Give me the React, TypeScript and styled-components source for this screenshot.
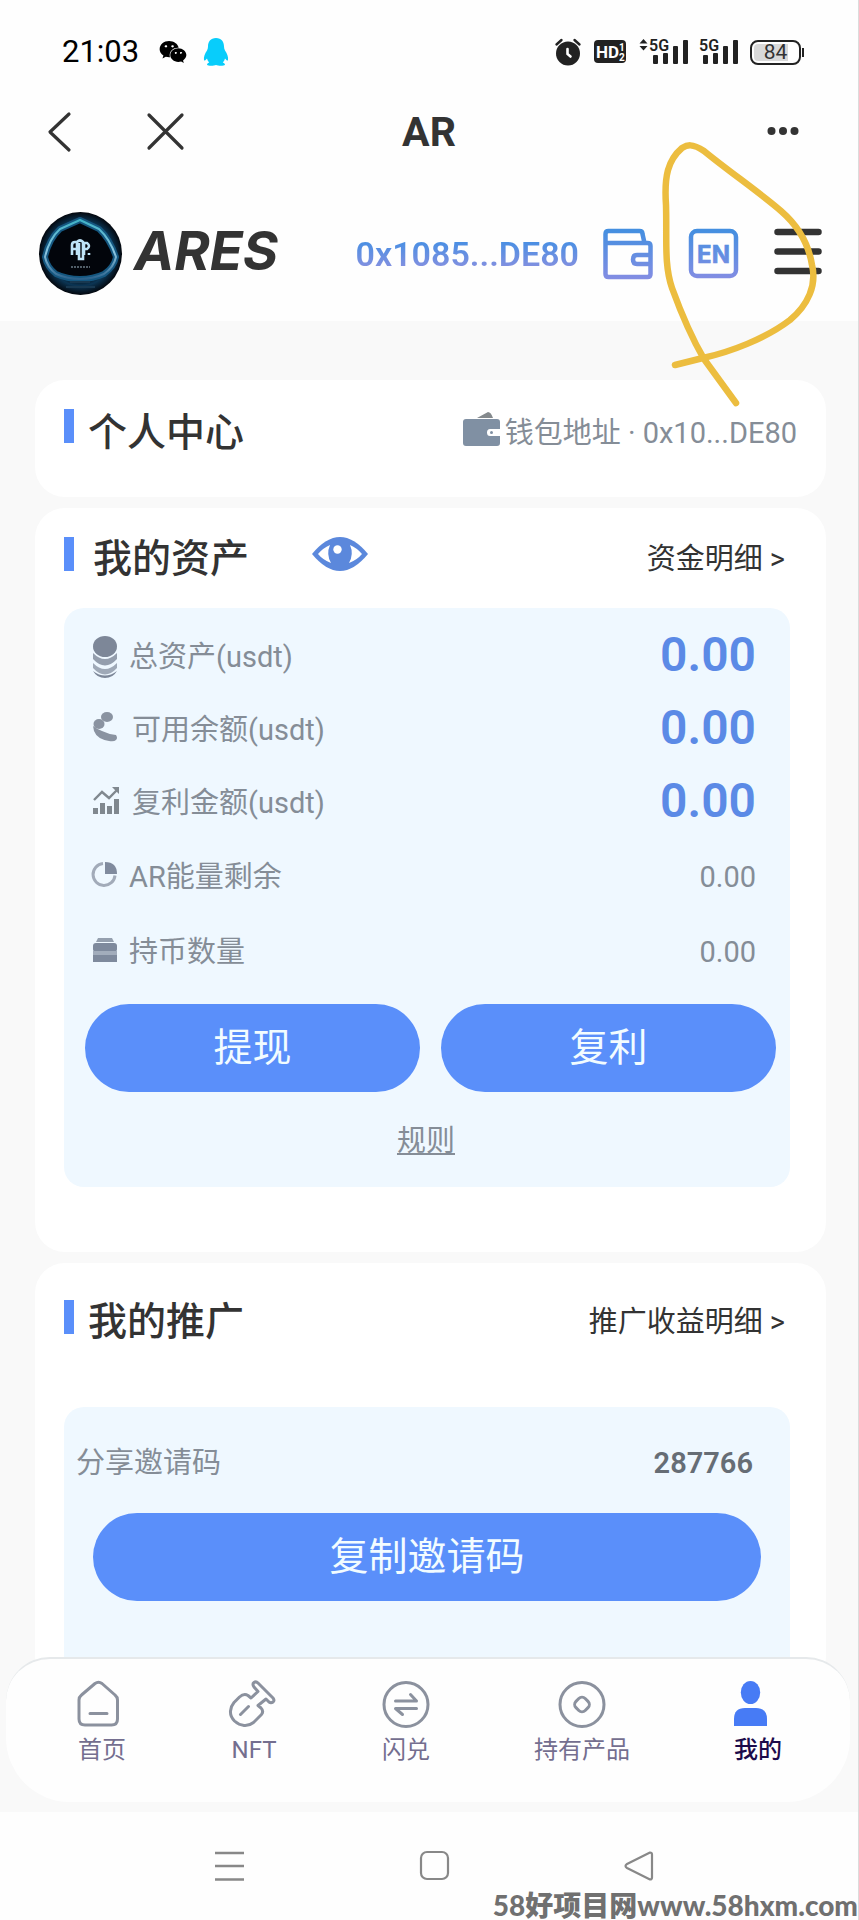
import React from "react";
import styled, { createGlobalStyle } from "styled-components";
import { FaWeixin } from "react-icons/fa";

const blue = "#5a8ffa";
const grey = "#858d97";
const ink = "#333333";

const GlobalStyle = createGlobalStyle`
  * { box-sizing: border-box; }
  body {
    margin: 0;
    background: #ffffff;
    color: ${ink};
    font-family: Roboto, "Noto Sans CJK SC", sans-serif;
  }
  button {
    padding: 0;
    border: 0;
    background: none;
    color: inherit;
    font: inherit;
    cursor: pointer;
  }
  a { color: inherit; text-decoration: none; }
  h1, h2, p, dl, dd { margin: 0; }
  svg { display: block; flex: none; overflow: visible; }
`;

const Page = styled.div`
  position: relative;
  display: flex;
  flex-direction: column;
  min-height: 100vh;
  overflow: hidden;
  background: #fefefe;
  border-right: 1px solid #dcdcdc;
`;

const StatusBar = styled.div`
  display: flex;
  align-items: center;
  justify-content: space-between;
  height: 104px;
  padding: 0 57px 0 62px;
`;

const StatusGroup = styled.div<{ $gap: number }>`
  display: flex;
  align-items: center;
  gap: ${(p) => p.$gap}px;
`;

const Clock = styled.span`
  margin-right: 4px;
  color: #000000;
  font-size: 31px;
  line-height: 36px;
`;

const Battery = styled.span`
  position: relative;
  display: flex;
  align-items: center;
  justify-content: center;
  width: 51px;
  height: 25px;
  padding: 2px;
  border: 2px solid #222222;
  border-radius: 8px;
  background: linear-gradient(to right, #d9d9d9 80%, #ffffff 80%) content-box;
  font-size: 21px;
  line-height: 20px;

  &::after {
    content: "";
    position: absolute;
    right: -5px;
    width: 2px;
    height: 9px;
    background: #222222;
  }
`;

const TitleBar = styled.header`
  display: grid;
  grid-template-columns: 1fr auto 1fr;
  align-items: center;
  height: 56px;
  padding: 0 47px;
`;

const TitleActions = styled.div<{ $end?: boolean }>`
  display: flex;
  justify-content: ${(p) => (p.$end ? "flex-end" : "flex-start")};
  gap: 74px;
  padding-right: ${(p) => (p.$end ? 12 : 0)}px;
`;

const AppTitle = styled.h1`
  font-size: 41px;
  font-weight: 700;
  line-height: 56px;
`;

const BrandBar = styled.div`
  display: flex;
  align-items: center;
  justify-content: space-between;
  height: 161px;
  padding: 26px 36px 0 39px;
`;

const Brand = styled.a`
  display: flex;
  align-items: center;
  gap: 12px;
`;

const BrandName = styled.span`
  padding-bottom: 5px;
  font-family: Inter, "Open Sans", sans-serif;
  font-size: 54px;
  font-style: italic;
  font-weight: 700;
  line-height: 64px;
`;

const BrandActions = styled.div`
  display: flex;
  align-items: center;
  gap: 36px;
`;

const WalletButton = styled.button`
  display: flex;
  align-items: center;
  gap: 24px;
`;

const Address = styled.span`
  background: linear-gradient(#4a8fe3 20%, #8090e0 80%);
  background-clip: text;
  color: transparent;
  font-size: 34px;
  font-weight: 600;
  line-height: 40px;
`;

const Content = styled.main`
  display: flex;
  flex-direction: column;
  gap: 11px;
  padding: 59px 32px 0 35px;
  background: #f9f9f9;
`;

const Card = styled.section<{ $top: number; $bottom: number }>`
  padding: ${(p) => p.$top}px 36px ${(p) => p.$bottom}px 29px;
  border-radius: 30px;
  background: #ffffff;
`;

const CardHead = styled.div<{ $bottom: number }>`
  display: flex;
  align-items: center;
  justify-content: space-between;
  padding-bottom: ${(p) => p.$bottom}px;
`;

const CardTitle = styled.h2<{ $indent?: number; $tall?: boolean }>`
  display: flex;
  align-items: flex-start;
  gap: ${(p) => p.$indent ?? 14}px;
  font-size: 39px;
  font-weight: 500;
  line-height: ${(p) => (p.$tall ? 48 : 44)}px;

  &::before {
    content: "";
    width: 10px;
    height: 34px;
    background: ${blue};
  }
`;

const TitleGroup = styled.div`
  display: flex;
  align-items: flex-start;
  gap: 63px;
`;

const WalletLine = styled.p`
  display: flex;
  align-items: center;
  gap: 5px;
  color: ${grey};
  font-size: 29px;
  line-height: 36px;
  margin-right: -7px;
`;

const MoreLink = styled.a`
  margin-right: 5px;
  font-size: 29px;
  line-height: 36px;
`;

const Panel = styled.div<{ $bottom: number }>`
  padding: 12px 14px ${(p) => p.$bottom}px 12px;
  border-radius: 20px;
  background: #eff8ff;
`;

const Rows = styled.dl`
  padding: 0 20px 0 17px;
`;

const Row = styled.div<{ $big?: boolean }>`
  display: flex;
  align-items: center;
  justify-content: space-between;
  height: ${(p) => (p.$big ? 73 : 75)}px;
  color: ${grey};
  font-size: 29px;
  line-height: 36px;
`;

const RowLabel = styled.dt`
  display: flex;
  align-items: center;
  gap: 12px;
`;

const RowValue = styled.dd<{ $big?: boolean }>`
  padding-bottom: ${(p) => (p.$big ? 4 : 0)}px;
  color: ${(p) => (p.$big ? "#5b8ae6" : grey)};
  font-size: ${(p) => (p.$big ? 48 : 29)}px;
  font-weight: ${(p) => (p.$big ? 600 : 400)};
  line-height: 64px;
`;

const ButtonRow = styled.div`
  display: grid;
  grid-template-columns: 1fr 1fr;
  gap: 21px;
  padding: 15px 0 0 9px;
`;

const PillButton = styled.button`
  height: 88px;
  border-radius: 44px;
  background: ${blue};
  color: #f2fcff;
  font-size: 39px;
  line-height: 46px;
`;

const RulesLink = styled.a`
  display: block;
  width: max-content;
  margin: 31px auto 0;
  color: ${grey};
  font-size: 29px;
  line-height: 36px;
  text-decoration: underline;
`;

const InviteRow = styled.div`
  display: flex;
  align-items: center;
  justify-content: space-between;
  padding: 26px 23px 32px 0;
  color: ${grey};
  font-size: 29px;
  line-height: 36px;
`;

const InviteCode = styled.strong`
  color: #666d75;
  font-weight: 600;
`;

const CopyRow = styled.div`
  display: grid;
  padding: 0 15px 0 17px;
`;

const TabArea = styled.div`
  position: relative;
  margin-top: -30px;
  padding: 0 8px 10px 6px;
  background: linear-gradient(transparent 30px, #f9f9f9 30px);
`;

const TabBar = styled.nav`
  display: flex;
  justify-content: space-between;
  padding: 21px 68px 37px 72px;
  border-top: 2px solid #e6e9eb;
  border-radius: 44px 44px 64px 64px;
  background: #fefefe;
`;

const Tab = styled.a<{ $active?: boolean }>`
  display: flex;
  flex-direction: column;
  align-items: center;
  gap: 7px;
  color: ${(p) => (p.$active ? "#1c0b4b" : "#746e8f")};
  font-size: 24px;
  font-weight: ${(p) => (p.$active ? 500 : 400)};
  line-height: 30px;
`;

const SystemBar = styled.div`
  display: flex;
  justify-content: space-between;
  padding: 38px 203px 38px 214px;
`;

const Watermark = styled.p`
  position: absolute;
  right: 0;
  bottom: 0;
  color: #707070;
  font-family: Lato, "Noto Sans CJK SC", sans-serif;
  font-size: 28px;
  font-weight: 900;
  line-height: 30px;
  white-space: nowrap;
`;

const Scribble = styled.svg`
  position: absolute;
  top: 140px;
  right: 40px;
  pointer-events: none;
`;

const PenguinIcon = () => (
  <svg width="26" height="28" viewBox="0 0 26 28" fill="#08cdfb">
    <path d="M13 0C7.500 0 5 4 5 8.500c0 1.500-.3 2.700-1 4C2 15.500.4 19 1 22c.3 1.200 1.600.3 3-1.500.4 1.600 1.100 2.900 2.200 4-1.600.6-2.600 1.600-2 2.600.5.9 7 .9 8.800 0 1.800.9 8.300.9 8.800 0 .6-1-.4-2-2-2.600 1.100-1.100 1.800-2.400 2.200-4 1.400 1.800 2.700 2.700 3 1.500.6-3-1-6.500-3-9.500-.7-1.300-1-2.500-1-4C21 4 18.500 0 13 0Z" />
  </svg>
);

const AlarmIcon = () => (
  <svg width="26" height="28" viewBox="0 0 26 28" fill="none" strokeLinecap="round">
    <circle cx="13" cy="15.500" r="12" fill="#222" />
    <path d="M1.500 6.500 6.500 2M24.500 6.500 19.500 2" stroke="#222" strokeWidth="2.400" />
    <path d="M12.500 11v5l3 2.500" stroke="#fff" strokeWidth="2.600" />
  </svg>
);

const HdIcon = () => (
  <svg width="34" height="24" viewBox="0 0 34 24" fontFamily="Roboto" fontWeight="700" fill="#fff">
    <rect x="1" y="0" width="32" height="23" rx="4" fill="#222" />
    <text x="3" y="18" fontSize="17">HD</text>
    <text x="26" y="11" fontSize="10">1</text>
    <text x="26" y="21" fontSize="10">2</text>
  </svg>
);

const SignalIcon = ({ arrows }: { arrows?: boolean }) => (
  <svg width={arrows ? 49 : 38} height="28" viewBox={arrows ? "-11 0 49 28" : "0 0 38 28"} fill="#222">
    {arrows && <path d="M-10.500 5.500 -6.500 1l4 4.500ZM-10.500 8l4 4.500 4-4.500Z" />}
    <text x="-1" y="12.500" fontSize="16" fontFamily="Roboto" fontWeight="600">5G</text>
    <rect x="3" y="17" width="5" height="9" rx="1" />
    <rect x="13" y="15" width="5" height="11" rx="1" />
    <rect x="23" y="8" width="5" height="18" rx="1" />
    <rect x="33" y="2" width="5" height="24" rx="1" />
  </svg>
);

const BrandLogo = () => (
  <svg width="83" height="83" viewBox="0 0 83 83" fill="none">
    <defs>
      <radialGradient id="halo" cx="50%" cy="50%" r="50%">
        <stop offset="55%" stopColor="#020409" />
        <stop offset="78%" stopColor="#0b3554" />
        <stop offset="100%" stopColor="#03060c" />
      </radialGradient>
      <linearGradient id="neon" x1="0" y1="0" x2="0" y2="1">
        <stop offset="0" stopColor="#3fb2c6" />
        <stop offset=".55" stopColor="#8cc5e0" />
        <stop offset="1" stopColor="#2c628c" />
      </linearGradient>
    </defs>
    <circle cx="41.500" cy="41.500" r="41.500" fill="url(#halo)" />
    <path d="M41 8 60 17Q71 27 77 45 75 55 65 62 54 67 41 67 28 67 17 62 8 55 6 45 10 27 21 17Z" fill="#02050b" stroke="#155780" strokeWidth="6" strokeLinejoin="round" />
    <path d="M41 8 60 17Q71 27 77 45 75 55 65 62 54 67 41 67 28 67 17 62 8 55 6 45 10 27 21 17Z" stroke="url(#neon)" strokeWidth="2" strokeLinejoin="round" />
    <path d="M31 70h20M27 75h29" stroke="#183850" strokeWidth="2" />
    <path d="M33 43V33q0-3 3-3h2v13M33 37h5M38 30q3-3 6 0v17h-4V31M45 43V31h3q4 3 0 6h-3M50 41v2" stroke="#bfe4f8" strokeWidth="2.600" />
    <path d="M32 55h19" stroke="#6c7c88" strokeWidth="1.500" strokeDasharray="2 1" />
  </svg>
);

const HeaderGradient = ({ id }: { id: string }) => (
  <linearGradient id={id} x1="0" y1="0" x2="0" y2="50" gradientUnits="userSpaceOnUse">
    <stop offset="0" stopColor="#438fe0" />
    <stop offset="1" stopColor="#838de3" />
  </linearGradient>
);

const WalletOutlineIcon = () => (
  <svg width="50" height="50" viewBox="0 0 50 50" fill="none" stroke="url(#wallet)" strokeWidth="4.500" strokeLinejoin="round">
    <defs><HeaderGradient id="wallet" /></defs>
    <path d="M2.500 14V5q0-3 3-3h31q3 0 3 3l2 9M2.500 14h42q3 0 3 3v28q0 3-3 3h-39q-3 0-3-3V12M47 26H34q-4 0-4 4.500t4 4.500h13" />
  </svg>
);

const LanguageIcon = () => (
  <svg width="49" height="49" viewBox="0 0 49 49" fill="none">
    <defs><HeaderGradient id="lang" /></defs>
    <rect x="2" y="2" width="45" height="45" rx="6" stroke="url(#lang)" strokeWidth="4.500" />
    <text x="24.500" y="34" textAnchor="middle" fill="url(#lang)" stroke="url(#lang)" strokeWidth=".6" fontFamily="Inter" fontSize="24" fontWeight="700">EN</text>
  </svg>
);

const MenuIcon = () => (
  <svg width="48" height="52" viewBox="0 0 48 52" stroke="#333" strokeWidth="6.500" strokeLinecap="round">
    <path d="M3.500 4h41M3.500 23.500h41M3.500 43h41" />
  </svg>
);

const WalletSolidIcon = () => (
  <svg width="37" height="42" viewBox="0 0 37 42" fill="#8090a3">
    <path d="M14 6 25 0q3 0 5 6Z" fill="#84898c" />
    <path d="M3 7h31q3 0 3 3v7H27q-3 0-3 3.500t3 3.500h10v7q0 3-3 3H3q-3 0-3-3V10q0-3 3-3Z" />
    <circle cx="28.500" cy="20.500" r="1.500" />
  </svg>
);

const EyeIcon = () => (
  <svg width="56" height="34" viewBox="0 0 56 34">
    <path d="M0 17Q14 0 28 0t28 17Q42 34 28 34T0 17Z" fill="#5b88dc" />
    <path d="M6 17q5-6 12-9-4 9 1 18-8-3-13-9ZM50 17q-5-6-12-9 4 9-1 18 8-3 13-9Z" fill="#fff" />
    <circle cx="25.500" cy="12.500" r="4.200" fill="#fff" />
  </svg>
);

const CoinsIcon = () => (
  <svg width="24" height="42" viewBox="0 0 24 42" fill="#7d8798">
    <ellipse cx="12" cy="10.500" rx="12" ry="10.500" />
    <path d="M0 17q12 12 24 0v6q-12 13-24 0Z" opacity=".8" />
    <path d="M0 27q12 12 24 0v5q-12 13-24 0Z" opacity=".7" />
    <path d="M0 35q12 9 24 0-4 7-12 7T0 35Z" />
  </svg>
);

const HandCoinIcon = () => (
  <svg width="27" height="36" viewBox="0 0 27 36" fill="#8a93a1">
    <ellipse cx="14" cy="5" rx="6" ry="5" />
    <ellipse cx="6" cy="12" rx="5.500" ry="5" />
    <path d="M0 14q4 3 9 5 6 3 14 4 2 3 0 5-2 2-7 1Q4 27 1 19Z" />
  </svg>
);

const GrowthIcon = () => (
  <svg width="27" height="32" viewBox="0 0 27 32" fill="#80888f">
    <path d="m1 13 8-8 7 6 9-9" fill="none" stroke="#80888f" strokeWidth="2.400" />
    <path d="M19 0h7v7ZM0 21h5v6H0ZM7 16h5v11H7ZM14 19h5v8h-5ZM21 12h5v15h-5Z" />
  </svg>
);

const PieIcon = () => (
  <svg width="24" height="32" viewBox="0 0 24 32">
    <path d="M10 2.500a11 11 0 1 0 12 12" fill="none" stroke="#a2abb9" strokeWidth="3" />
    <path d="M12 1q12 0 12 12H12Z" fill="#808b9e" />
  </svg>
);

const BoxIcon = () => (
  <svg width="24" height="28" viewBox="0 0 24 28">
    <path d="M5 0h14l2 4H3Z" fill="#95a0af" />
    <rect y="5" width="24" height="9" rx="3" fill="#7e8a9d" />
    <rect y="13" width="24" height="4" fill="#a2adbc" />
    <rect y="17" width="24" height="7" fill="#7e8a9d" />
  </svg>
);

const tabStroke = { fill: "none", stroke: "#8b919e", strokeWidth: 3, strokeLinecap: "round", strokeLinejoin: "round" } as const;

const HomeTabIcon = () => (
  <svg width="48" height="48" viewBox="0 0 48 48" {...tabStroke}>
    <path d="M1 20q0-3 2.500-5L17 3.500q3.500-2.500 7 0L37 15q2.500 2 2.500 5v19q0 6-6 6H7q-6 0-6-6ZM12 33.500h17" />
  </svg>
);

const FlaskTabIcon = () => (
  <svg width="48" height="48" viewBox="0 0 48 48" {...tabStroke}>
    <path d="M28 3 43 18Q45 20.500 43 22 41 23.500 39 22L36 19 28 25.500 31 28Q34 31 31.500 34.500L23.500 42.500Q19 46 14 45.500 9 45 4.500 41 0 36.500.5 31 1 26 4 22.500L9.500 17Q14 13 18 15.500L21 18 28 11.500 24 7Q22 4 24 2.500 26 1 28 3ZM18.500 26.500 10.500 34.500" />
  </svg>
);

const SwapTabIcon = () => (
  <svg width="48" height="48" viewBox="0 0 48 48" {...tabStroke}>
    <circle cx="24" cy="24.500" r="22" />
    <path d="M13.500 21H34.500L28.500 14.500M34.500 28.500H13.500L20.500 34.500" />
  </svg>
);

const CoinTabIcon = () => (
  <svg width="48" height="48" viewBox="0 0 48 48" {...tabStroke}>
    <circle cx="24" cy="24.500" r="22" />
    <rect x="17.500" y="18" width="13" height="13" rx="4.500" transform="rotate(45 24 24.500)" />
  </svg>
);

const PersonTabIcon = () => (
  <svg width="48" height="48" viewBox="0 0 48 48" fill="#477bf5">
    <ellipse cx="16.500" cy="12.500" rx="9.700" ry="11.500" />
    <path d="M0 46V39q0-11 11-11h11q11 0 11 11v7Z" />
  </svg>
);

const assets = [
  { label: "总资产(usdt)", value: "0.00", big: true, icon: <CoinsIcon /> },
  { label: "可用余额(usdt)", value: "0.00", big: true, icon: <HandCoinIcon /> },
  { label: "复利金额(usdt)", value: "0.00", big: true, icon: <GrowthIcon /> },
  { label: "AR能量剩余", value: "0.00", big: false, icon: <PieIcon /> },
  { label: "持币数量", value: "0.00", big: false, icon: <BoxIcon /> },
];

const tabs = [
  { label: "首页", icon: <HomeTabIcon /> },
  { label: "NFT", icon: <FlaskTabIcon /> },
  { label: "闪兑", icon: <SwapTabIcon /> },
  { label: "持有产品", icon: <CoinTabIcon /> },
  { label: "我的", icon: <PersonTabIcon />, active: true },
];

export default function App() {
  return (
    <Page>
      <GlobalStyle />
      <StatusBar>
        <StatusGroup $gap={16}>
          <Clock>21:03</Clock>
          <FaWeixin size={28} color="#000" />
          <PenguinIcon />
        </StatusGroup>
        <StatusGroup $gap={12}>
          <AlarmIcon />
          <HdIcon />
          <SignalIcon arrows />
          <SignalIcon />
          <Battery>84</Battery>
        </StatusGroup>
      </StatusBar>

      <TitleBar>
        <TitleActions>
          <button aria-label="返回">
            <svg width="26" height="40" viewBox="0 0 26 40" fill="none" stroke={ink} strokeWidth="3.200" strokeLinecap="round" strokeLinejoin="round">
              <path d="M22 2 3 20l19 18" />
            </svg>
          </button>
          <button aria-label="关闭">
            <svg width="38" height="40" viewBox="0 0 38 40" stroke={ink} strokeWidth="3.200" strokeLinecap="round">
              <path d="m2 3 33 33M35 3 2 36" />
            </svg>
          </button>
        </TitleActions>
        <AppTitle>AR</AppTitle>
        <TitleActions $end>
          <button aria-label="更多">
            <svg width="32" height="10" viewBox="0 0 32 10" fill={ink}>
              <circle cx="4.500" cy="4" r="4" />
              <circle cx="16" cy="4" r="4" />
              <circle cx="27.500" cy="4" r="4" />
            </svg>
          </button>
        </TitleActions>
      </TitleBar>

      <BrandBar>
        <Brand href="#">
          <BrandLogo />
          <BrandName>ARES</BrandName>
        </Brand>
        <BrandActions>
          <WalletButton>
            <Address>0x1085...DE80</Address>
            <WalletOutlineIcon />
          </WalletButton>
          <button aria-label="切换语言"><LanguageIcon /></button>
          <button aria-label="菜单"><MenuIcon /></button>
        </BrandActions>
      </BrandBar>

      <Content>
        <Card $top={29} $bottom={40}>
          <CardHead $bottom={0}>
            <CardTitle $tall>个人中心</CardTitle>
            <WalletLine>
              <WalletSolidIcon />
              钱包地址 · 0x10...DE80
            </WalletLine>
          </CardHead>
        </Card>

        <Card $top={29} $bottom={65}>
          <CardHead $bottom={27}>
            <TitleGroup>
              <CardTitle $indent={19}>我的资产</CardTitle>
              <button aria-label="显示或隐藏资产"><EyeIcon /></button>
            </TitleGroup>
            <MoreLink href="#">资金明细 &gt;</MoreLink>
          </CardHead>
          <Panel $bottom={28}>
            <Rows>
              {assets.map((item) => (
                <Row key={item.label} $big={item.big}>
                  <RowLabel>{item.icon}{item.label}</RowLabel>
                  <RowValue $big={item.big}>{item.value}</RowValue>
                </Row>
              ))}
            </Rows>
            <ButtonRow>
              <PillButton>提现</PillButton>
              <PillButton>复利</PillButton>
            </ButtonRow>
            <RulesLink href="#">规则</RulesLink>
          </Panel>
        </Card>

        <Card $top={37} $bottom={0}>
          <CardHead $bottom={63}>
            <CardTitle>我的推广</CardTitle>
            <MoreLink href="#">推广收益明细 &gt;</MoreLink>
          </CardHead>
          <Panel $bottom={86}>
            <InviteRow>
              <span>分享邀请码</span>
              <InviteCode>287766</InviteCode>
            </InviteRow>
            <CopyRow>
              <PillButton>复制邀请码</PillButton>
            </CopyRow>
          </Panel>
        </Card>
      </Content>

      <TabArea>
        <TabBar>
          {tabs.map((tab) => (
            <Tab key={tab.label} href="#" $active={tab.active}>
              {tab.icon}
              {tab.label}
            </Tab>
          ))}
        </TabBar>
      </TabArea>

      <SystemBar>
        <button aria-label="最近任务">
          <svg width="32" height="32" viewBox="0 0 32 32" stroke="#888" strokeWidth="2.400">
            <path d="M1 3h29M1 16h29M1 29.500h29" />
          </svg>
        </button>
        <button aria-label="主屏幕">
          <svg width="32" height="32" viewBox="0 0 32 32" fill="none" stroke="#888" strokeWidth="2.200">
            <rect x="2" y="2" width="27" height="27" rx="6" />
          </svg>
        </button>
        <button aria-label="系统返回">
          <svg width="32" height="32" viewBox="0 0 32 32" fill="none" stroke="#888" strokeWidth="2.200" strokeLinejoin="round">
            <path d="M27 2.500q2 0 2 2v23q0 2-2 2L4 18q-3-2 0-4Z" />
          </svg>
        </button>
      </SystemBar>

      <Watermark>58好项目网www.58hxm.com</Watermark>
      <Scribble width="160" height="270" viewBox="658 140 160 270" fill="none" stroke="#ecbd3f" strokeWidth="6.500" strokeLinecap="round" strokeLinejoin="round">
        <path d="M675 365 703 358C730 352 765 339 790 320 808 305 817 285 812 265 808 240 796 224 781 211 763 195 727 170 704 151 692 143 687 145 682 148 668 160 664 176 666 205 667 240 664 265 672 288 680 310 690 335 704 359L736 403" />
      </Scribble>
    </Page>
  );
}
